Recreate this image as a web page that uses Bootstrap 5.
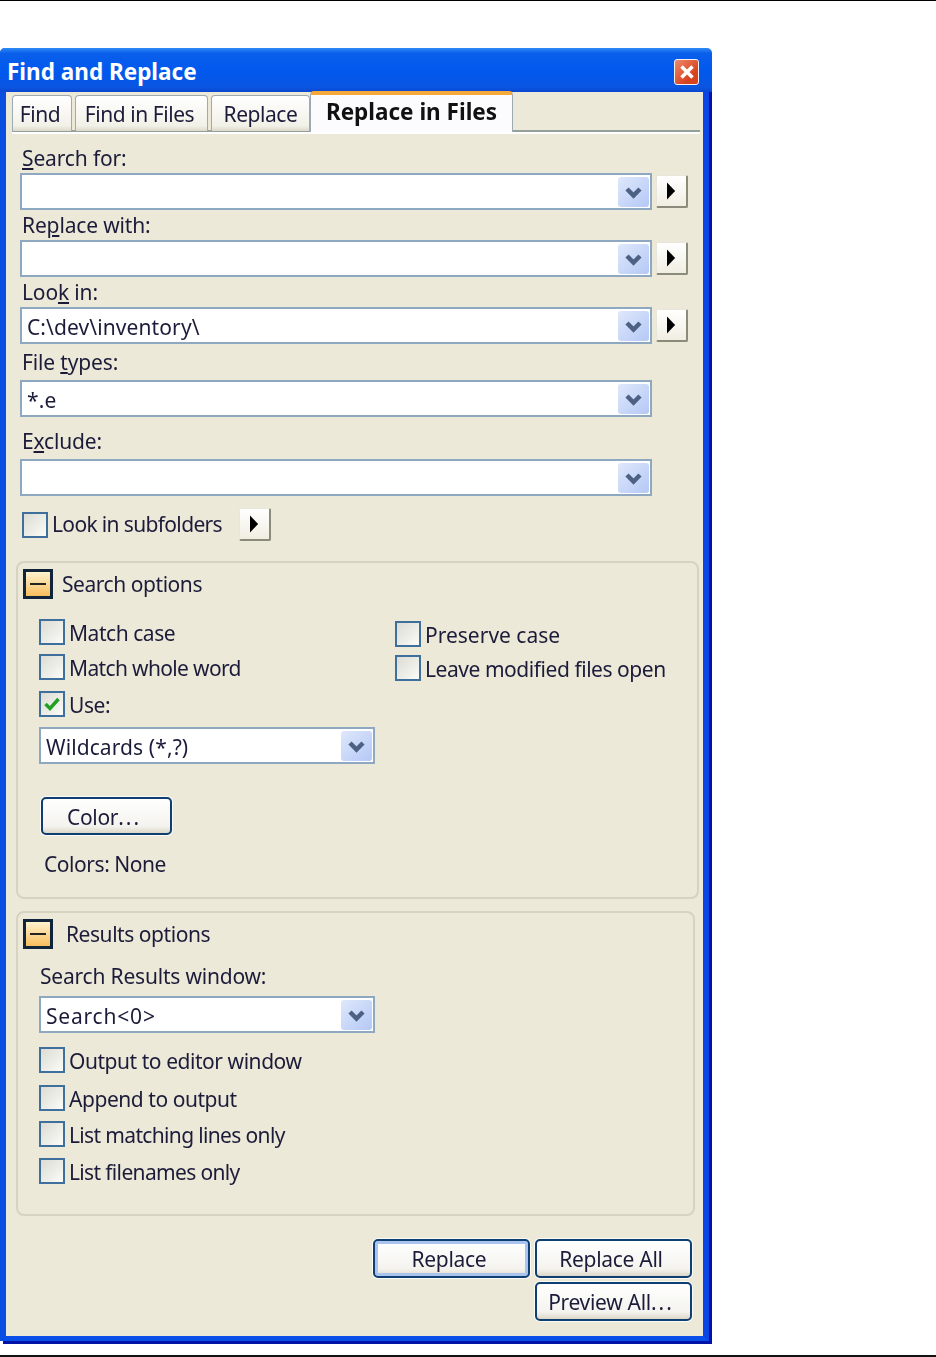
<!DOCTYPE html>
<html lang="en">
<head>
<meta charset="UTF-8">
<title>Find and Replace</title>
<link href="https://cdn.jsdelivr.net/npm/bootstrap@5.3.2/dist/css/bootstrap.min.css" rel="stylesheet">
<style>
  html, body { height: 1357px; overflow: hidden; }
  body { background: #fff; border-top: 1px solid #000; font-family: "Noto Sans", "DejaVu Sans", sans-serif; font-size: 21px; letter-spacing: -.45px; color: #1c1c3a; line-height: 1; }
  .page-end { height: 2px; background: #111; margin-top: 14px; }
  .dlg { width: 709px; height: 1293px; margin-top: 47px; background: #ece9d8; border-radius: 5px 5px 0 0; border-left: 6px solid #0a4fe0; border-right: 6px solid #0a45e5; border-bottom: 5px solid #0a4fe8; box-shadow: 3px 3px 0 #0012a8; filter: blur(.55px); }
  .dlg-title { height: 44px; margin-left: -6px; margin-right: -9px; padding: 5px 13px 0 7px; background: linear-gradient(#2f8cf5 0, #0a5fea 12%, #0058ee 50%, #0a55e0 90%, #0a45d0 100%); color: #fff; font-weight: 700; font-size: 22.500px; letter-spacing: 0; border-radius: 5px 5px 0 0; }
  .close-x { width: 25px; height: 26px; margin-top: -1px; border: 1px solid #f2f2f2; border-radius: 3px; background: linear-gradient(135deg, #ee8a6c, #d8431f 70%); }
  .tabstrip { height: 42px; padding: 3px 0 0 6px; }
  .tabstrip .nav { border-bottom: 2px solid #94a09c; box-shadow: 0 2px 0 #fff; width: 688px; height: 37px; flex-wrap: nowrap; }
  .tabstrip .nav-link { height: 36px; padding: 1px 0 0; margin-right: 3px; display: flex; align-items: center; justify-content: center; color: #1c1c3a; background: linear-gradient(#fff, #f2f1e8 85%, #dcd9ca); border: 1px solid #9daab3; border-bottom: 0; border-radius: 4px 4px 0 0; }
  .tabstrip .nav-link.active { height: 41px; margin-top: -4px; margin-left: -3px; margin-right: 0; padding: 0 0 2px; background: #fcfcfe; font-weight: 700; font-size: 22.500px; letter-spacing: 0; color: #111; border: 1px solid #9daab3; border-top: 4px solid #f5a93a; border-bottom: 0; }
  .t1 { width: 60px; } .t2 { width: 133px; } .t3 { width: 99px; } .t4 { width: 203px; }
  .tabstrip .nav-link.t1, .tabstrip .nav-link.t2 { padding-right: 4px; }
  .fields { padding-left: 14px; }
  .lbl { height: 18px; padding-left: 2px; display: flex; align-items: center; letter-spacing: -.15px; }
  .combo { width: 632px; height: 37px; background: #fff; border: 2px solid #8fa8c2; padding: 0 1px 0 5px; }
  .combo.short { width: 336px; }
  .combo-value { flex: 1; padding-top: 4px; letter-spacing: .1px; }
  .combo-value.wide { letter-spacing: .8px; }
  .combo-arrow { width: 31px; height: 30px; background: linear-gradient(135deg, #dfe8fb, #b4c8f6); border-radius: 3px; }
  .arrow-btn { width: 32px; height: 33px; margin-left: 4px; background: linear-gradient(#fff, #f0eee2); border: 1px solid #e8e6da; border-right: 2px solid #8c8a78; border-bottom: 2px solid #8c8a78; border-radius: 2px; }
  .chk { width: 26px; height: 26px; border: 2px solid #3f6f9c; background: linear-gradient(135deg, #dcdcd4, #fbfbf8); flex-shrink: 0; margin-right: 4px; }
  .opt { height: 26px; }
  .opt span:last-child { padding-top: 2px; }
  .tight { letter-spacing: -.65px; }
  .loose { letter-spacing: 0; }
  .grp { border: 2px solid #d6d3c0; border-radius: 8px; }
  .grp1 { width: 683px; height: 338px; margin-left: 10px; margin-top: 20px; padding: 6px 5px 0 5px; }
  .grp2 { width: 679px; height: 305px; margin-left: 10px; margin-top: 12px; padding: 6px 5px 0 5px; }
  .toggle { width: 30px; height: 30px; border: 3px solid #10253a; background: linear-gradient(#fff3cf, #f7bd5c); margin-right: 9px; }
  .toggle i { display: block; width: 16px; height: 2px; background: #222; }
  .toggle2 { margin-right: 13px; }
  .grp-body { padding-left: 16px; }
  .xp-btn { height: 38px; background: linear-gradient(#fff, #f4f3ee 80%, #dcd8c8); border: 2px solid #0f3f72; border-radius: 5px; color: #1c1c3a; font-size: 21px; letter-spacing: -.3px; padding: 2px 5px 0 0; line-height: 1; box-shadow: 0 0 0 1px #fbfbf6; }
  .xp-btn.dflt { box-shadow: inset 0 0 0 3px #a9c4ee, 0 0 0 1px #fbfbf6; }
  .btn-color { width: 131px; margin-left: 2px; margin-top: 33px; }
  .btn-main { width: 157px; }
  .colors-line { margin-top: 17px; margin-left: 5px; height: 24px; display: flex; align-items: center; }
  .dots { letter-spacing: 2px; }
  .u { text-decoration: underline; text-underline-offset: 2px; }
  .actions { width: 686px; margin-top: 23px; gap: 5px; }
  .actions .xp-btn { height: 39px; }
  .f-search { height: 39px; padding-top: 9px; }
  .f-gap { height: 30px; padding-top: 1px; }
  .f-gap2 { height: 36px; }
  .f-gap3 { height: 42px; padding-top: 6px; }
  .f-sub { margin-top: 12px; margin-left: 2px; height: 33px; }
  .f-sub-btn { margin-left: 17px; }
  .opts-top { margin-top: 20px; }
  .opt-col { width: 356px; }
  .opt-col2 { padding-top: 2px; }
  .opt-g1 { margin-top: 9px; }
  .opt-g2 { margin-top: 11px; }
  .opt-g3 { margin-top: 8px; }
  .combo-gap { margin-top: 10px; }
  .results-lbl { height: 39px; margin-top: 8px; padding-left: 1px; letter-spacing: -.2px; }
  .r1 { margin-top: 14px; }
  .r2 { margin-top: 12px; }
  .r3 { margin-top: 10px; }
  .r4 { margin-top: 11px; }
</style>
</head>
<body>

<svg width="0" height="0" class="d-block position-absolute">
  <symbol id="chev" viewBox="0 0 31 30"><path d="M9 12l6.500 6.500L22 12" fill="none" stroke="#4d6185" stroke-width="4.500"/></symbol>
  <symbol id="tri" viewBox="0 0 32 33"><path d="M11 7l9 9.500-9 9.500z" fill="#000"/></symbol>
</svg>

<div class="dlg">
  <div class="dlg-title d-flex align-items-center justify-content-between">
    <span>Find and Replace</span>
    <span class="close-x d-flex align-items-center justify-content-center">
      <svg width="16" height="16" viewBox="0 0 16 16"><path d="M2.500 2.500l11 11M13.500 2.500l-11 11" stroke="#fff" stroke-width="3.500"/></svg>
    </span>
  </div>

  <div class="tabstrip">
    <ul class="nav">
      <li class="nav-item"><a class="nav-link t1" href="#">Find</a></li>
      <li class="nav-item"><a class="nav-link t2" href="#">Find in Files</a></li>
      <li class="nav-item"><a class="nav-link t3" href="#">Replace</a></li>
      <li class="nav-item"><a class="nav-link active t4" href="#">Replace in Files</a></li>
    </ul>
  </div>

  <div class="fields">
    <div class="lbl f-search"><span><span class="u">S</span>earch for:</span></div>
    <div class="d-flex align-items-center">
      <div class="combo d-flex align-items-center"><span class="combo-value"></span><svg class="combo-arrow"><use href="#chev"/></svg></div>
      <svg class="arrow-btn"><use href="#tri"/></svg>
    </div>
    <div class="lbl f-gap"><span>Re<span class="u">p</span>lace with:</span></div>
    <div class="d-flex align-items-center">
      <div class="combo d-flex align-items-center"><span class="combo-value"></span><svg class="combo-arrow"><use href="#chev"/></svg></div>
      <svg class="arrow-btn"><use href="#tri"/></svg>
    </div>
    <div class="lbl f-gap"><span>Loo<span class="u">k</span> in:</span></div>
    <div class="d-flex align-items-center">
      <div class="combo d-flex align-items-center"><span class="combo-value">C:\dev\inventory\</span><svg class="combo-arrow"><use href="#chev"/></svg></div>
      <svg class="arrow-btn"><use href="#tri"/></svg>
    </div>
    <div class="lbl f-gap2"><span>File <span class="u">t</span>ypes:</span></div>
    <div class="combo d-flex align-items-center"><span class="combo-value">*.e</span><svg class="combo-arrow"><use href="#chev"/></svg></div>
    <div class="lbl f-gap3"><span>E<span class="u">x</span>clude:</span></div>
    <div class="combo d-flex align-items-center"><span class="combo-value"></span><svg class="combo-arrow"><use href="#chev"/></svg></div>
    <div class="d-flex align-items-center f-sub">
      <span class="chk"></span><span class="tight">Look in subfolders</span>
      <svg class="arrow-btn f-sub-btn"><use href="#tri"/></svg>
    </div>
  </div>

  <div class="grp grp1">
    <div class="d-flex align-items-center">
      <span class="toggle d-flex align-items-center justify-content-center"><i></i></span><span>Search options</span>
    </div>
    <div class="grp-body">
      <div class="d-flex opts-top">
        <div class="opt-col">
          <div class="opt d-flex align-items-center"><span class="chk"></span><span>Match case</span></div>
          <div class="opt d-flex align-items-center opt-g1"><span class="chk"></span><span class="tight">Match whole word</span></div>
          <div class="opt d-flex align-items-center opt-g2">
            <span class="chk d-flex align-items-center justify-content-center">
              <svg width="18" height="18" viewBox="0 0 18 18"><path d="M2.500 9l4.500 4.500L15.500 4" fill="none" stroke="#21a121" stroke-width="3.500"/></svg>
            </span><span>Use:</span>
          </div>
        </div>
        <div class="opt-col2">
          <div class="opt d-flex align-items-center"><span class="chk"></span><span class="loose">Preserve case</span></div>
          <div class="opt d-flex align-items-center opt-g3"><span class="chk"></span><span>Leave modified files open</span></div>
        </div>
      </div>
      <div class="combo short d-flex align-items-center combo-gap"><span class="combo-value">Wildcards (*,?)</span><svg class="combo-arrow"><use href="#chev"/></svg></div>
      <button type="button" class="btn xp-btn btn-color d-block">Color<span class="dots">...</span></button>
      <div class="colors-line">Colors: None</div>
    </div>
  </div>

  <div class="grp grp2">
    <div class="d-flex align-items-center">
      <span class="toggle toggle2 d-flex align-items-center justify-content-center"><i></i></span><span>Results options</span>
    </div>
    <div class="grp-body">
      <div class="lbl results-lbl"><span>Search Results window:</span></div>
      <div class="combo short d-flex align-items-center"><span class="combo-value wide">Search&lt;0&gt;</span><svg class="combo-arrow"><use href="#chev"/></svg></div>
      <div class="opt d-flex align-items-center r1"><span class="chk"></span><span>Output to editor window</span></div>
      <div class="opt d-flex align-items-center r2"><span class="chk"></span><span>Append to output</span></div>
      <div class="opt d-flex align-items-center r3"><span class="chk"></span><span class="tight">List matching lines only</span></div>
      <div class="opt d-flex align-items-center r4"><span class="chk"></span><span class="tight">List filenames only</span></div>
    </div>
  </div>

  <div class="d-flex justify-content-end actions">
    <button type="button" class="btn xp-btn dflt btn-main">Replace</button>
    <div class="d-flex flex-column gap-1">
      <button type="button" class="btn xp-btn btn-main">Replace All</button>
      <button type="button" class="btn xp-btn btn-main">Preview All<span class="dots">...</span></button>
    </div>
  </div>
</div>
<div class="page-end"></div>

</body>
</html>
